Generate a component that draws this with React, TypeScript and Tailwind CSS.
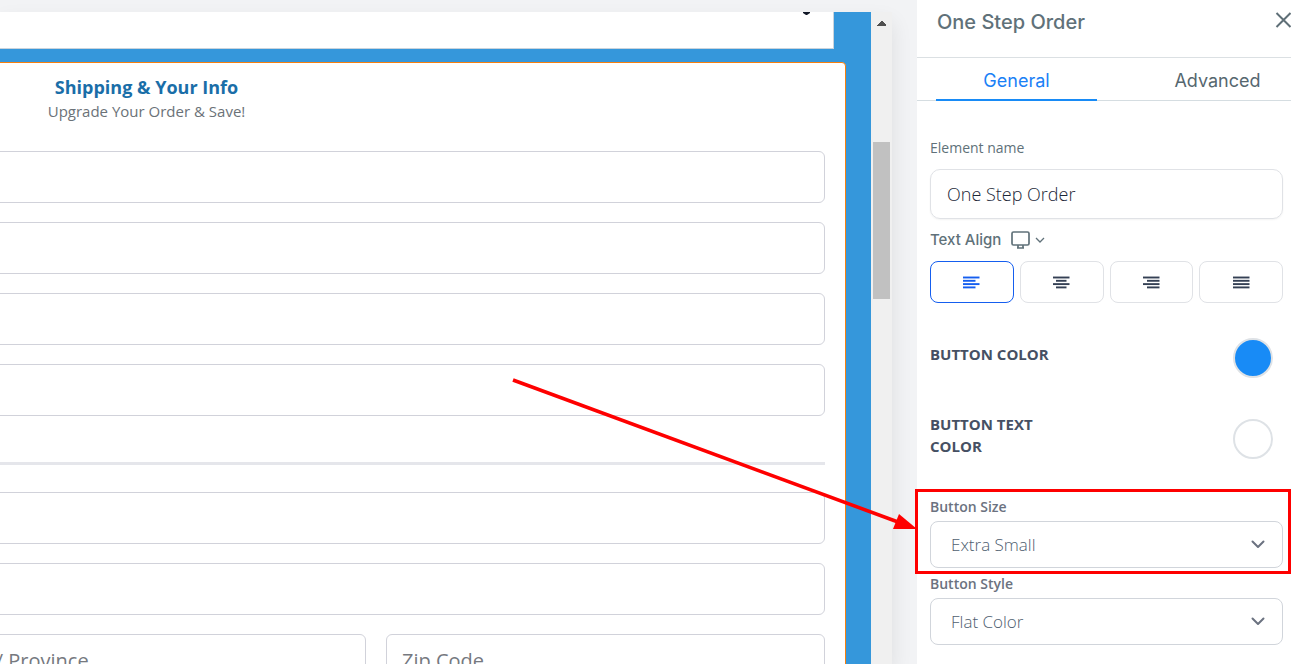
import { useState } from 'react'
import type { ReactNode } from 'react'

const ALIGNMENTS = [
  { id: 'left', label: 'Align left', lines: [[0, 16], [0, 12], [0, 16], [0, 12]] },
  { id: 'center', label: 'Align center', lines: [[0, 16], [3, 13], [0, 16], [3, 13]] },
  { id: 'right', label: 'Align right', lines: [[0, 16], [4, 16], [0, 16], [4, 16]] },
  { id: 'justify', label: 'Justify', lines: [[0, 16], [0, 16], [0, 16], [0, 16]] },
]

const TABS = ['General', 'Advanced']

function FormInput({ label, placeholder }: { label: string; placeholder?: string }) {
  return (
    <input
      type="text"
      aria-label={label}
      placeholder={placeholder}
      className="block h-[52px] w-full min-w-0 rounded-md border border-[#d1d2da] bg-white px-[15px] text-xl text-gray-700 placeholder:text-[#76797f]"
    />
  )
}

function OrderForm() {
  return (
    <form className="-ml-[94px] mr-[25px] mt-[13px] flex flex-1 flex-col rounded-tr-sm border border-[#f77f0e] bg-white px-5 pt-3">
      <div className="grid grid-cols-2 gap-5">
        <div className="text-center">
          <h2 className="text-lg leading-6 font-bold text-[#1a6ea8]">Shipping &amp; Your Info</h2>
          <p className="text-[15px] leading-6 text-[#6b7278]">Upgrade Your Order &amp; Save!</p>
        </div>
      </div>
      <div className="mt-7 flex flex-col gap-[19px]">
        <FormInput label="Full name" />
        <FormInput label="Email" />
        <FormInput label="Phone" />
        <FormInput label="Company" />
      </div>
      <hr className="mt-[46px] mb-[27px] border-t-[3px] border-[#e5e6eb]" />
      <div className="flex flex-col gap-[19px]">
        <FormInput label="Address" />
        <FormInput label="City" />
        <div className="grid grid-cols-2 gap-5">
          <FormInput label="State / Province" placeholder="State / Province" />
          <FormInput label="Zip Code" placeholder="Zip Code" />
        </div>
      </div>
    </form>
  )
}

function ScrollTrack() {
  return (
    <div className="flex w-[21px] shrink-0 flex-col bg-[#f0f0f0] px-[2px] pt-[9px]">
      <svg width="9" height="5" viewBox="0 0 9 5" className="mx-auto shrink-0" shapeRendering="crispEdges">
        <path d="M4 0h1l4 4v1H0V4z" fill="#505050" />
      </svg>
      <div className="mt-[116px] h-[157px] shrink-0 bg-[#c1c1c1]" />
    </div>
  )
}

function Canvas() {
  return (
    <main className="mt-3 mr-[25px] flex min-w-0 flex-1 shadow-[0_10px_20px_rgba(0,0,0,0.09)]">
      <div className="flex min-w-0 flex-1 flex-col overflow-hidden bg-[#3597db]">
        <div className="mr-[37px] flex h-[37px] shrink-0 justify-end border-r border-b border-[#c9d3dc] bg-white pr-[23px]">
          <svg width="7" height="3" viewBox="0 0 7 3">
            <path d="M0 0h7v1L4 3H3L0 1z" fill="#111827" />
          </svg>
        </div>
        <OrderForm />
      </div>
      <ScrollTrack />
    </main>
  )
}

function AlignIcon({ lines }: { lines: number[][] }) {
  return (
    <svg width="17" height="13" viewBox="0 0 17 13" fill="none" stroke="currentColor" strokeWidth="1.9">
      {lines.map(([from, to], i) => (
        <path key={i} d={`M${from} ${1.5 + i * 3.3}H${to + 0.5}`} />
      ))}
    </svg>
  )
}

function ColorRow({ label, swatch }: { label: string; swatch: string }) {
  return (
    <div className="flex items-center justify-between pr-[10px]">
      <span className="w-32 pb-2 text-[15px] leading-[22px] font-bold text-[#465063]">{label}</span>
      <button type="button" aria-label={label} className={`size-10 shrink-0 rounded-full border-2 border-[#dee2e6] ${swatch}`} />
    </div>
  )
}

interface SelectFieldProps {
  id: string
  label: string
  options: string[]
  children?: ReactNode
}

function SelectField({ id, label, options, children }: SelectFieldProps) {
  return (
    <div className="relative flex flex-col gap-1">
      <label htmlFor={id} className="text-sm leading-5 font-semibold text-[#6b7280]">{label}</label>
      <div className="relative">
        <select
          id={id}
          className="block h-[47px] w-full appearance-none rounded-lg border border-[#d1d5db] bg-white px-5 text-[17px] font-light text-[#4f6070]"
        >
          {options.map(o => <option key={o}>{o}</option>)}
        </select>
        <svg
          width="14"
          height="9"
          viewBox="0 0 14 9"
          fill="none"
          stroke="#6b7280"
          strokeWidth="2"
          strokeLinecap="round"
          strokeLinejoin="round"
          className="pointer-events-none absolute top-[19px] right-[18px]"
        >
          <path d="M1.5 1.5 7 7l5.500-5.500" />
        </svg>
      </div>
      {children}
    </div>
  )
}

// Red frame around a field, with an arrow coming in from the canvas
function Callout() {
  return (
    <div className="pointer-events-none absolute -top-2 -right-2 -bottom-[6px] -left-[15px] border-[3px] border-[#fe0000]">
      <svg
        width="408"
        height="156"
        viewBox="0 0 408 156"
        className="absolute -top-[116px] right-full max-w-none"
        fill="#fe0000"
      >
        <path d="M3 4 388 146" stroke="#fe0000" strokeWidth="3.600" />
        <path d="M389 138 407 153 383 153z" />
      </svg>
    </div>
  )
}

function SettingsPanel() {
  const [tab, setTab] = useState('General')
  const [align, setAlign] = useState('left')
  const [name, setName] = useState('One Step Order')

  return (
    <aside className="relative w-[374px] shrink-0 bg-white">
      <header className="flex h-[58px] items-start justify-between border-b border-[#dbe0e3] pt-2 pl-5">
        <h1 className="font-['Inter'] text-xl leading-7 font-medium text-[#607179]">One Step Order</h1>
        <button type="button" aria-label="Close" className="pt-1 text-[#5f6f77]">
          <svg width="16" height="16" viewBox="0 0 16 16" fill="none" stroke="currentColor" strokeWidth="2">
            <path d="M1.500 1l14 14M15.500 1l-14 14" />
          </svg>
        </button>
      </header>

      {/* Tabs */}
      <div role="tablist" className="flex h-[43px] gap-10 border-b border-[#d5dde1] pl-[19px]">
        {TABS.map(t => (
          <button
            key={t}
            type="button"
            role="tab"
            aria-selected={tab === t}
            onClick={() => setTab(t)}
            className={`-mb-px w-[161px] shrink-0 border-b-2 pt-1 font-['Inter'] text-[18px] ${
              tab === t ? 'border-[#188bf6] text-[#1a80f6]' : 'border-transparent text-[#56676f]'
            }`}
          >
            {t}
          </button>
        ))}
      </div>

      <div className="flex flex-col pt-[37px] pr-2 pl-[13px]">
        <div className="flex flex-col gap-[11px]">
          <label htmlFor="element-name" className="text-sm leading-5 text-[#607179]">Element name</label>
          <input
            id="element-name"
            value={name}
            onChange={e => setName(e.target.value)}
            className="h-[50px] w-full rounded-[10px] border border-[#e0e2e6] px-4 text-[18px] font-light text-[#1c2738] shadow-xs"
          />
          <div className="flex h-5 items-center">
            <span className="font-['Inter'] text-[15px] font-medium text-[#607179]">Text Align</span>
            <button type="button" aria-label="Device" className="ml-[10px] flex items-center gap-[5px] text-[#607179]">
              <svg width="19" height="18" viewBox="0 0 19 18" fill="none" stroke="currentColor" strokeWidth="1.700">
                <rect x="1" y="1" width="17" height="13" rx="1.500" />
                <path d="M7 14v2.500M12 14v2.500M6 17h7" />
              </svg>
              <svg width="10" height="6" viewBox="0 0 10 6" fill="none" stroke="currentColor" strokeWidth="1.300">
                <path d="M1 1l4 4 4-4" />
              </svg>
            </button>
          </div>
          <div className="grid grid-cols-4 gap-[6px]">
            {ALIGNMENTS.map(a => (
              <button
                key={a.id}
                type="button"
                aria-label={a.label}
                onClick={() => setAlign(a.id)}
                className={`flex h-[42px] items-center justify-center rounded-lg border ${
                  align === a.id ? 'border-[#155eef] text-[#155eef]' : 'border-[#e0e2e6] text-[#344054]'
                }`}
              >
                <AlignIcon lines={a.lines} />
              </button>
            ))}
          </div>
        </div>

        <div className="mt-[35px] flex flex-col gap-[35px]">
          <ColorRow label="BUTTON COLOR" swatch="bg-[#188bf6]" />
          <ColorRow label="BUTTON TEXT COLOR" swatch="bg-white" />
        </div>

        <div className="mt-8 flex flex-col gap-[6px]">
          <SelectField id="button-size" label="Button Size" options={['Extra Small', 'Small', 'Medium', 'Large']}>
            <Callout />
          </SelectField>
          <SelectField id="button-style" label="Button Style" options={['Flat Color', 'Gradient', 'Outline']} />
        </div>
      </div>
    </aside>
  )
}

export default function App() {
  return (
    <div className="flex h-screen overflow-hidden bg-[#f2f3f5] font-['Open_Sans',sans-serif]">
      <Canvas />
      <SettingsPanel />
    </div>
  )
}
